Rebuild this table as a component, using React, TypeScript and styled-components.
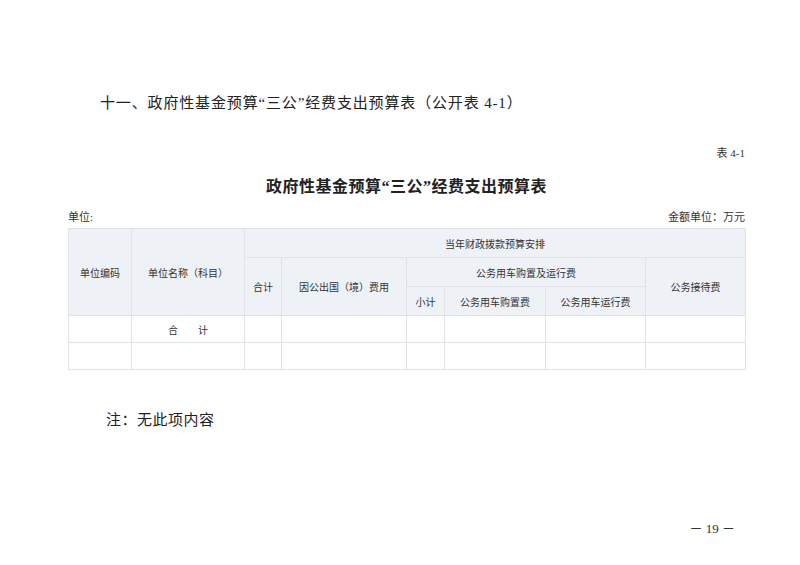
import React from "react";
import styled, { createGlobalStyle } from "styled-components";

const GlobalStyle = createGlobalStyle`
  html, body {
    margin: 0;
    padding: 0;
    background: #fff;
  }
  body {
    font-family: "Liberation Serif", "Noto Sans CJK SC", serif;
    color: #222;
  }
`;

const Page = styled.div`
  width: 800px;
  height: 565px;
  box-sizing: border-box;
  padding: 0 55px 0 68px;
  display: flex;
  flex-direction: column;
  background: #fff;
`;

const Heading = styled.h1`
  margin: 93px 0 0 32px;
  height: 20px;
  line-height: 20px;
  font-size: 15px;
  font-weight: 400;
  letter-spacing: 0.85px;
  color: #222;
`;

const TableNo = styled.div`
  margin-top: 33px;
  align-self: flex-end;
  font-size: 11px;
  line-height: 14px;
  height: 14px;
  color: #333;
`;

const Title = styled.h2`
  margin: 18px 0 0;
  text-align: center;
  font-size: 16px;
  line-height: 18px;
  height: 18px;
  font-weight: 700;
  letter-spacing: 0.5px;
  color: #222;
`;

const UnitRow = styled.div`
  margin-top: 14px;
  display: flex;
  justify-content: space-between;
  font-size: 11px;
  line-height: 14px;
  height: 14px;
  color: #333;
`;

const Table = styled.table`
  margin-top: 4px;
  width: 677px;
  border-collapse: collapse;
  table-layout: fixed;
  font-size: 10px;
  color: #333;
`;

const HeadCell = styled.th`
  height: 28px;
  padding: 0;
  border: 1px solid #dfe3e8;
  background: #eef1f6;
  font-weight: 400;
  text-align: center;
  vertical-align: middle;
`;

const BodyCell = styled.td`
  height: 26px;
  padding: 0;
  border: 1px solid #dfe3e8;
  background: #fff;
  text-align: center;
  vertical-align: middle;
  white-space: pre;
`;

const Note = styled.div`
  margin: 40px 0 0 38px;
  font-size: 15px;
  line-height: 20px;
  height: 20px;
  letter-spacing: 0.5px;
  color: #222;
`;

const PageNo = styled.div`
  margin-top: 90px;
  align-self: flex-end;
  margin-right: 10px;
  font-size: 13px;
  line-height: 18px;
  color: #333;
  white-space: pre;
`;

const widths = [63, 113, 37, 125, 38, 101, 100, 100];

export default function App() {
  return (
    <>
      <GlobalStyle />
      <Page>
        <Heading>十一、政府性基金预算“三公”经费支出预算表（公开表 4-1）</Heading>
        <TableNo>表 4-1</TableNo>
        <Title>政府性基金预算“三公”经费支出预算表</Title>
        <UnitRow>
          <span>单位:</span>
          <span>金额单位：万元</span>
        </UnitRow>
        <Table>
          <colgroup>
            {widths.map((w, i) => (
              <col key={i} style={{ width: w }} />
            ))}
          </colgroup>
          <thead>
            <tr>
              <HeadCell rowSpan={3}>单位编码</HeadCell>
              <HeadCell rowSpan={3}>单位名称（科目）</HeadCell>
              <HeadCell colSpan={6}>当年财政拨款预算安排</HeadCell>
            </tr>
            <tr>
              <HeadCell rowSpan={2}>合计</HeadCell>
              <HeadCell rowSpan={2}>因公出国（境）费用</HeadCell>
              <HeadCell colSpan={3}>公务用车购置及运行费</HeadCell>
              <HeadCell rowSpan={2}>公务接待费</HeadCell>
            </tr>
            <tr>
              <HeadCell>小计</HeadCell>
              <HeadCell>公务用车购置费</HeadCell>
              <HeadCell>公务用车运行费</HeadCell>
            </tr>
          </thead>
          <tbody>
            <tr>
              <BodyCell />
              <BodyCell>{"合　　计"}</BodyCell>
              <BodyCell />
              <BodyCell />
              <BodyCell />
              <BodyCell />
              <BodyCell />
              <BodyCell />
            </tr>
            <tr>
              {widths.map((_, i) => (
                <BodyCell key={i} />
              ))}
            </tr>
          </tbody>
        </Table>
        <Note>注：无此项内容</Note>
        <PageNo>{"－ 19 －"}</PageNo>
      </Page>
    </>
  );
}
